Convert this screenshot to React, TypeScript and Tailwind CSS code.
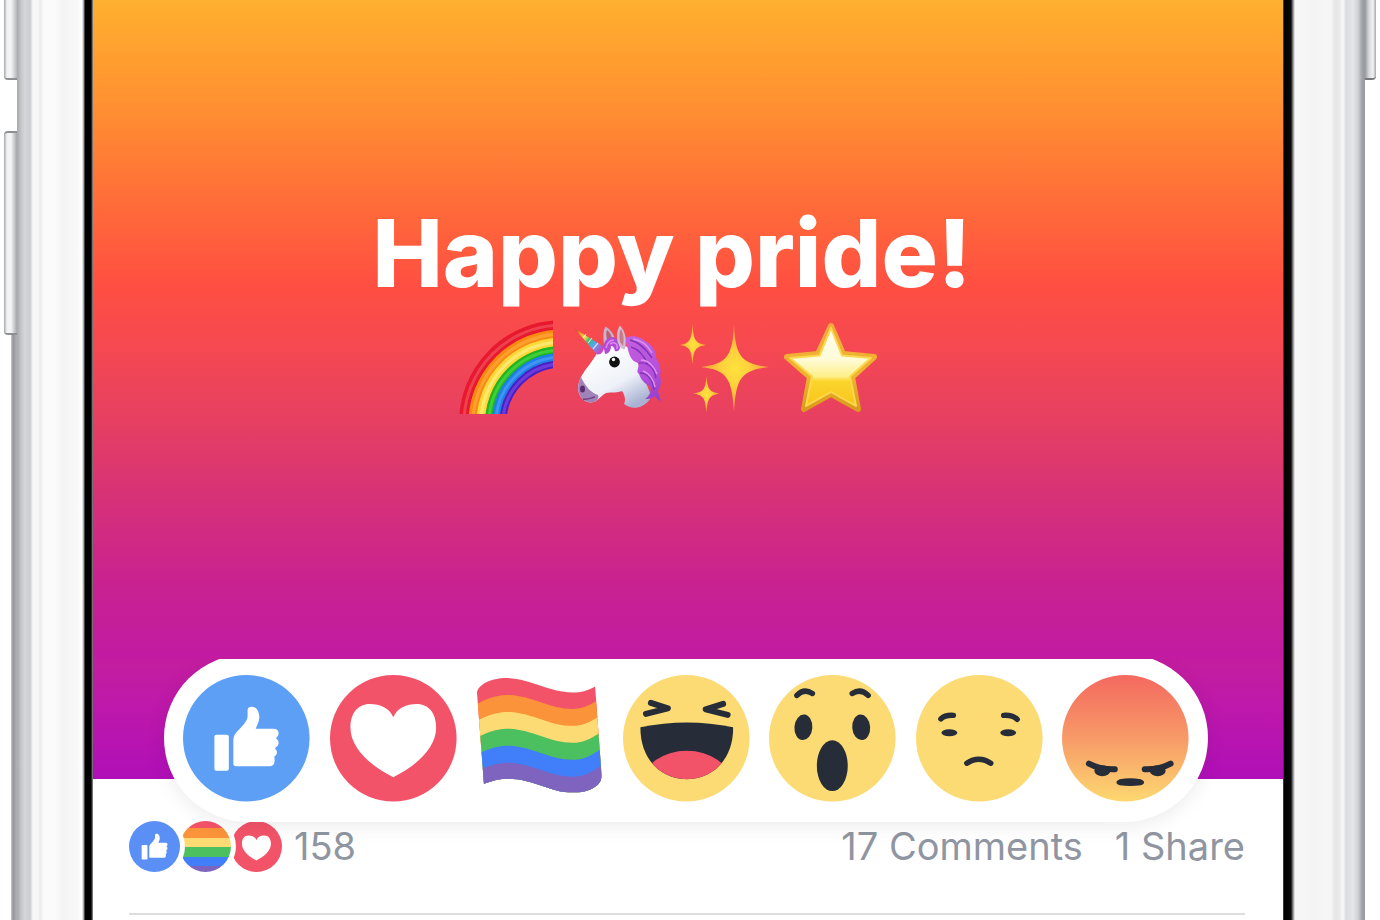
import type { ReactNode } from 'react';

function Rainbow() {
  const bands = [
    { r: 98, w: 10, color: '#e8182f', shine: '#f0525c' },
    { r: 89, w: 9, color: '#fb8a12', shine: '#ffa93c' },
    { r: 81, w: 9, color: '#ffd83a', shine: '#fff08a' },
    { r: 73, w: 8, color: '#1fb61f', shine: '#4fd844' },
    { r: 66, w: 8, color: '#1f7fe8', shine: '#4aa0fa' },
    { r: 59, w: 7, color: '#4a1fc4', shine: '#7a48e6' },
  ];

  return (
    <svg viewBox="0 0 96 96" className="size-24" role="img" aria-label="Rainbow">
      <clipPath id="rainbow-clip">
        <rect x="0" y="0" width="95" height="94" />
      </clipPath>
      <g clipPath="url(#rainbow-clip)" fill="none">
        {bands.map((b) => (
          <circle key={b.color} cx="104" cy="103" r={b.r} stroke={b.color} strokeWidth={b.w} />
        ))}
        {bands.map((b) => (
          <circle key={b.shine} cx="104" cy="103" r={b.r} stroke={b.shine} strokeWidth="3" opacity="0.7" />
        ))}
      </g>
    </svg>
  );
}

function Unicorn() {
  return (
    <svg viewBox="0 0 96 96" className="size-24" role="img" aria-label="Unicorn">
      <defs>
        <linearGradient id="horn" x1="9" y1="9" x2="35" y2="32" gradientUnits="userSpaceOnUse">
          <stop offset="0" stopColor="#c0392b" />
          <stop offset="0.22" stopColor="#f5a623" />
          <stop offset="0.38" stopColor="#e8dc4a" />
          <stop offset="0.52" stopColor="#3cb878" />
          <stop offset="0.7" stopColor="#4fa8f0" />
          <stop offset="1" stopColor="#d43fc0" />
        </linearGradient>
        <linearGradient id="coat" x1="30" y1="30" x2="62" y2="88" gradientUnits="userSpaceOnUse">
          <stop offset="0" stopColor="#ffffff" />
          <stop offset="0.6" stopColor="#eef1f8" />
          <stop offset="1" stopColor="#a9b2d2" />
        </linearGradient>
        <linearGradient id="mane" x1="65" y1="18" x2="90" y2="80" gradientUnits="userSpaceOnUse">
          <stop offset="0" stopColor="#c45fe0" />
          <stop offset="0.6" stopColor="#b44fdc" />
          <stop offset="1" stopColor="#9440cc" />
        </linearGradient>
      </defs>
      <path d="M38 24 C37 17 37 11 39.500 6.500 C44 9 47 13 49 19 Z" fill="#c9b3d0" />
      <path d="M41 20 C40 15 40 12 41 10 C44 12 45 15 46 18 Z" fill="#b5646f" />
      <path
        d="M31 33 C27 41 20 48 15 57 C11 65 11 74 17 79.500 C21 82.500 26 83.500 30 81 C34 78 36 75 40 73 C46 72 52 73 56 71 C59 76 60 80 58 84 C63 88 70 89 76 86 C80 84 83 81 86 76 C80 66 76 48 64 28 C54 23 40 25 31 33 Z"
        fill="url(#coat)"
      />
      <path d="M15 57 C11 65 11 74 17 79.500 C21 82.500 26 83.500 30 81 C32 79 33 77 32 75 C25 73 19 66 15 57 Z" fill="#a183ba" />
      <ellipse cx="16.500" cy="69" rx="2.500" ry="3.500" fill="#5b2d72" />
      <path d="M17 79 C21 80 25 78 29 77" stroke="#704084" strokeWidth="1.500" fill="none" />
      <path
        d="M59 18 C68 14 75 18 79 21 C87 25 91 33 90 38 C95 45 95 51 94 56 C96 62 94 68 92 71 C93 75 94 78 95 81 C91 80 90 77 88 76 C86 79 83 79 79 79 C84 76 86 70 84 66 C79 64 75 60 73 54 C69 52 74 47 72 43 C65 41 64 36 62 30 Z"
        fill="url(#mane)"
      />
      <path d="M64 20 C73 22 79 28 86 38 M65 27 C72 29 78 35 82 45 M73 43 C82 42 88 48 90 58 M74 53 C82 53 87 60 88 70" stroke="#8335b8" strokeWidth="1.500" fill="none" />
      <path d="M67 19 C75 20 82 26 86 33 M75 40 C82 40 88 46 91 54 M77 51 C83 53 88 60 89 67" stroke="#dc91f0" strokeWidth="1.500" fill="none" />
      <path d="M38 29 C37 22 40 18 47 17 C51 18 53 22 54 27 C54 30 52 32 49 31 C48 27 47 26 45 26 C45 30 43 34 39 34 Z" fill="#b44bd8" />
      <path d="M40 28 C41 23 44 20 48 20 M44 24 C49 21 52 24 51 29" stroke="#da8cf0" strokeWidth="1.500" fill="none" />
      <path d="M52 23 C50 16 51 10 54 5.500 C59 11 61 18 59 29 C57 30 54 28 52 23 Z" fill="#d3bcd6" />
      <path d="M54 22 C53 17 53 12 55 9 C58 14 58 20 57 26 Z" fill="#c77c86" />
      <path d="M8.500 8.500 L38 27 C38 31 35 35 31 34.500 Z" fill="url(#horn)" />
      <path d="M17 18 L20 14 M22 23 L26 18 M27 29 L32 23" stroke="#ffffff" strokeWidth="1.200" opacity="0.7" />
      <circle cx="48.500" cy="42" r="5.400" fill="#111111" />
      <circle cx="47.500" cy="39.500" r="1.700" fill="#ffffff" />
    </svg>
  );
}

function Sparkles() {
  return (
    <svg viewBox="0 0 96 96" className="size-24" role="img" aria-label="Sparkles">
      <defs>
        <radialGradient id="spark">
          <stop offset="0" stopColor="#ffe23c" />
          <stop offset="0.4" stopColor="#fdd13c" />
          <stop offset="1" stopColor="#f99a3c" />
        </radialGradient>
      </defs>
      <g fill="url(#spark)">
        <path d="M60 5 C61.500 36 67 44 95 47 C67 50 62 58 60 92 C58 58 53 50 27 47 C53 44 58.500 36 60 5 Z" />
        <path d="M18.500 4 C19.500 20 21 23 32 25 C21 27 19.500 30 18.500 45 C17.500 30 16 27 6 25 C16 23 17.500 20 18.500 4 Z" />
        <path d="M32.500 56 C33.500 69 35 72 46 73.500 C35 75 33.500 79 32.500 93 C31.500 79 30 75 19 73.500 C30 72 31.500 69 32.500 56 Z" />
      </g>
    </svg>
  );
}

function Star() {
  return (
    <svg viewBox="0 0 96 96" className="size-24" role="img" aria-label="Star">
      <defs>
        <linearGradient id="star-body" x1="0" y1="0" x2="0" y2="1">
          <stop offset="0" stopColor="#fffef0" />
          <stop offset="0.4" stopColor="#fffbd8" />
          <stop offset="0.62" stopColor="#fdf08a" />
          <stop offset="0.68" stopColor="#fbd52c" />
          <stop offset="1" stopColor="#f8c41c" />
        </linearGradient>
        <linearGradient id="star-edge" x1="0" y1="0" x2="0" y2="1">
          <stop offset="0" stopColor="#f3a83c" />
          <stop offset="0.6" stopColor="#f0b42c" />
          <stop offset="1" stopColor="#dc9a1c" />
        </linearGradient>
      </defs>
      <path
        d="M49 6 L61 34 L92 37 L70 57 L76 89 L49 74 L22 89 L28 57 L5 37 L36 34 Z"
        fill="url(#star-body)"
        stroke="url(#star-edge)"
        strokeWidth="6"
        strokeLinejoin="round"
      />
      <path
        d="M49 8 L60 35.500 L89 38 L68 56.500 L74 86 L49 72 L24 86 L30 56.500 L8 38 L37.500 35.500 Z"
        fill="url(#star-body)"
        stroke="#fbd84e"
        strokeWidth="2"
        strokeLinejoin="round"
      />
    </svg>
  );
}

function Thumb() {
  return (
    <g fill="#ffffff">
      <rect x="31.500" y="60" width="14.500" height="36" rx="2" />
      <path d="M50.500 89 V65 C50.500 61 53 58 56 55 C60 51 64.500 46 64.800 42 V35 C65 32 68 31.500 70.500 32 C75 33 77 39 76.500 44 C76 48 74 51 73 54 H91 C95 54 97 57.500 95.500 60.500 C95 62 93.500 62.500 93.500 64 C96 65 97 69 94.500 71.500 C93.500 72.500 92.500 72.500 92.500 74 C95 76 95 80 91.500 82 C92.500 86 92 91.500 87.500 91.500 H53 C51.500 91.500 50.500 90.500 50.500 89 Z" />
    </g>
  );
}

const heartPath =
  'M63.500 42.500 C60 33 50 29 40 29 C28 29 20.500 38 20.500 53 C20.500 75 44 93 63.500 102.500 C83 93 106.500 75 106.500 53 C106.500 38 99 29 87 29 C77 29 67 33 63.500 42.500 Z';

const flagColors = ['#f35369', '#fa9339', '#fddb74', '#4cbf5f', '#417ffa', '#7e64be'];

function Face({ children, fill = '#fcda74' }: { children: ReactNode; fill?: string }) {
  return (
    <svg viewBox="0 0 127 127" className="block w-full overflow-visible" aria-hidden="true">
      <circle cx="63.500" cy="63.500" r="63.500" fill={fill} />
      {children}
    </svg>
  );
}

function PrideFlag() {
  return (
    <svg viewBox="0 0 127 127" className="block w-full" aria-hidden="true">
      <clipPath id="flag-clip">
        <path d="M1 18 C2 9 16 3 31 3 C55 4 72 17 97 17.500 C105 17.500 112 16 119.500 11.500 L126 101 C126 113 110 118 97 118 C75 118 58 104 32 104 C24 104 16 106 8 109 Z" />
      </clipPath>
      <g clipPath="url(#flag-clip)">
        {flagColors.map((color, i) => (
          <path
            key={color}
            transform={`translate(0 ${i * 17})`}
            d={i === 0 ? 'M0 0 H127 V127 H0 Z' : 'M-4 15 C12 5 22 3 34 3 C56 4 74 17 97 17 C107 17 118 13 130 2 V127 H-4 Z'}
            fill={color}
          />
        ))}
      </g>
    </svg>
  );
}

const ink = '#262c38';

const reactions = [
  { name: 'Like', icon: <Face fill="#5e9ff6"><Thumb /></Face> },
  { name: 'Love', icon: <Face fill="#f35369"><path d={heartPath} fill="#ffffff" /></Face> },
  { name: 'Pride', icon: <PrideFlag /> },
  {
    name: 'Haha',
    icon: (
      <Face>
        <clipPath id="mouth-clip">
          <path d="M17.500 52.500 Q64 43 110.500 52.500 C111 82 92 104.500 64 104.500 C36 104.500 17 82 17.500 52.500 Z" />
        </clipPath>
        <g clipPath="url(#mouth-clip)">
          <rect width="127" height="127" fill={ink} />
          <ellipse cx="64" cy="108" rx="44" ry="32" fill="#f35369" />
        </g>
        <g fill="none" stroke={ink} strokeWidth="6" strokeLinecap="round" strokeLinejoin="round">
          <path d="M28 28 L45 33.500 L23 39" />
          <path d="M100.500 29 L83 34.500 L105 40" />
        </g>
      </Face>
    ),
  },
  {
    name: 'Wow',
    icon: (
      <Face>
        <g fill="none" stroke={ink} strokeWidth="5.500" strokeLinecap="round">
          <path d="M28 20.500 Q35 13 43.500 18.500" />
          <path d="M83.500 18.500 Q92 13 99.500 20.500" />
        </g>
        <g fill={ink}>
          <ellipse cx="34.500" cy="52.500" rx="9" ry="12.800" transform="rotate(4 34.500 52.500)" />
          <ellipse cx="92.500" cy="52.500" rx="9" ry="12.800" transform="rotate(-4 92.500 52.500)" />
          <ellipse cx="63.500" cy="91" rx="15.500" ry="25.500" />
        </g>
      </Face>
    ),
  },
  {
    name: 'Sad',
    icon: (
      <Face>
        <g fill="none" stroke={ink} strokeWidth="5.500" strokeLinecap="round">
          <path d="M25 44 Q29 40 37.500 40.500" />
          <path d="M88 40.500 Q97 40 101.500 44.500" />
          <path d="M51 88.500 Q63 80.500 75 88.500" />
        </g>
        <ellipse cx="33.500" cy="58" rx="8" ry="3.500" fill={ink} />
        <ellipse cx="92.500" cy="58" rx="8" ry="3.500" fill={ink} />
      </Face>
    ),
  },
  {
    name: 'Angry',
    icon: (
      <Face fill="url(#angry)">
        <linearGradient id="angry" x1="0" y1="0" x2="0" y2="1">
          <stop offset="0" stopColor="#f4695f" />
          <stop offset="0.5" stopColor="#f79a68" />
          <stop offset="1" stopColor="#fdd870" />
        </linearGradient>
        <g fill="none" stroke={ink} strokeWidth="6" strokeLinecap="round">
          <path d="M27 89 Q38 95 53 94.500" />
          <path d="M109 89 Q98 95 83 94.500" />
        </g>
        <ellipse cx="40.500" cy="96" rx="8" ry="5.500" fill={ink} />
        <ellipse cx="96" cy="96" rx="8" ry="5.500" fill={ink} />
        <path d="M58 104.500 Q68.500 102.500 79 104.500 C83.500 106 83.500 109.500 79 110.500 Q68.500 112 58 110.500 C53.500 109.500 53.500 106 58 104.500 Z" fill={ink} />
      </Face>
    ),
  },
];

function ReactionBar() {
  return (
    <div className="absolute -bottom-[43px] left-[71px] right-[75px] z-30 flex h-[168px] items-center gap-5 rounded-full bg-white px-[19px] shadow-[0_4px_20px_rgba(0,0,0,0.08)] [clip-path:inset(5px_-40px_-40px_-40px)]">
      {reactions.map((r) => (
        <button key={r.name} type="button" aria-label={r.name} className="flex-1">
          {r.icon}
        </button>
      ))}
    </div>
  );
}

function ReactionSummary() {
  return (
    <div className="flex items-center">
      <span className="relative z-20 size-[51px] rounded-full ring-5 ring-white">
        <Face fill="#5a8ff6"><Thumb /></Face>
      </span>
      <span className="relative z-10 flex size-[51px] flex-col overflow-hidden rounded-full ring-5 ring-white">
        <span className="h-[7px] bg-[#f35369]" />
        <span className="h-[10px] bg-[#fa9339]" />
        <span className="h-[9px] bg-[#fddb74]" />
        <span className="h-[10px] bg-[#4cbf5f]" />
        <span className="h-[9px] bg-[#417ffa]" />
        <span className="flex-1 bg-[#7e64be]" />
      </span>
      <span className="size-[51px]">
        <Face fill="#f35369">
          <path d={heartPath} fill="#ffffff" transform="translate(10 12) scale(0.84)" />
        </Face>
      </span>
      <span className="ml-3">158</span>
    </div>
  );
}

export default function App() {
  return (
    <div className="flex min-h-screen overflow-hidden bg-white font-['Inter',sans-serif]">
      {/* left edge of the phone with the volume keys */}
      <div className="flex w-[17px] shrink-0 flex-col">
        <div className="ml-1 h-20 rounded-bl border-b-2 border-[#8d8f93] bg-[linear-gradient(90deg,#a5a7ab_0,#f2f2f3_3px,#f5f5f6_7px,#b4b6ba_13px)]" />
        <div className="mt-[51px] ml-1 h-[204px] rounded-l border-y-2 border-[#8d8f93] bg-[linear-gradient(90deg,#a5a7ab_0,#f2f2f3_3px,#f5f5f6_7px,#a4a6aa_13px)]" />
        <div className="ml-[11px] flex-1 bg-[linear-gradient(90deg,#d0d0d2_0,#929498_2px,#b2b4b8_6px)]" />
      </div>
      <div className="w-[76px] shrink-0 bg-[linear-gradient(90deg,#a6a8ac_0,#c4c6ca_4px,#d6d7da_8px,#cbccd0_13px,#d8d9dc_14px,#f8f8f8_16px,#f6f6f6_21px,#ececec_23px,#fbfbfb_27px,#fafafa_40px,#f4f4f4_46px,#f8f8f8_60px,#ffffff_65px,#8c8c8c_67px,#000000_68px,#000000_74px,#999999_76px)]" />

      <main className="flex min-w-0 flex-1 flex-col bg-white">
        <section className="relative bg-[linear-gradient(180deg,#ffb02f_0,#ff9530_90px,#ff7138_190px,#ff4f42_285px,#f54852_350px,#e43e64_430px,#d52f7c_510px,#c9228f_580px,#c21ba2_655px,#c31da0_665px,#bd18ab_710px,#b00fb8_779px)] pt-[197px] pr-8 pb-[363px]">
          <h1 className="text-center text-[94px] leading-[112px] font-extrabold text-white">Happy pride!</h1>
          <div className="mt-[11px] mr-2 flex justify-center gap-3">
            <Rainbow />
            <Unicorn />
            <Sparkles />
            <Star />
          </div>
          <ReactionBar />
        </section>

        <footer className="pt-[42px] pr-[38px] pl-9 text-[38px] font-normal text-[#8f95a1]">
          <div className="flex h-[51px] items-center justify-between">
            <ReactionSummary />
            <div className="flex gap-8">
              <button type="button">17 Comments</button>
              <button type="button">1 Share</button>
            </div>
          </div>
          <hr className="mt-[41px] border-t-2 border-[#dcdde0]" />
        </footer>
      </main>

      {/* right edge with the power key */}
      <div className="w-[82px] shrink-0 bg-[linear-gradient(90deg,#777777_0,#000000_1px,#0a0a0a_8px,#8c8c8c_10px,#f8f8f8_12px,#f4f4f4_30px,#f6f6f6_48px,#e6e6e6_52px,#e9e9e9_56px,#f8f8f8_60px,#dadcdf_63px,#e5e6e9_70px,#d0d2d6_75px,#a0a3a7_79px,#97999d_82px)]" />
      <div className="w-[15px] shrink-0">
        <div className="mr-1 h-20 rounded-br border-b-2 border-[#77797d] bg-[linear-gradient(90deg,#97999d_0,#d8d9dc_4px,#f2f2f3_8px,#a5a7ab_11px)]" />
      </div>
    </div>
  );
}
